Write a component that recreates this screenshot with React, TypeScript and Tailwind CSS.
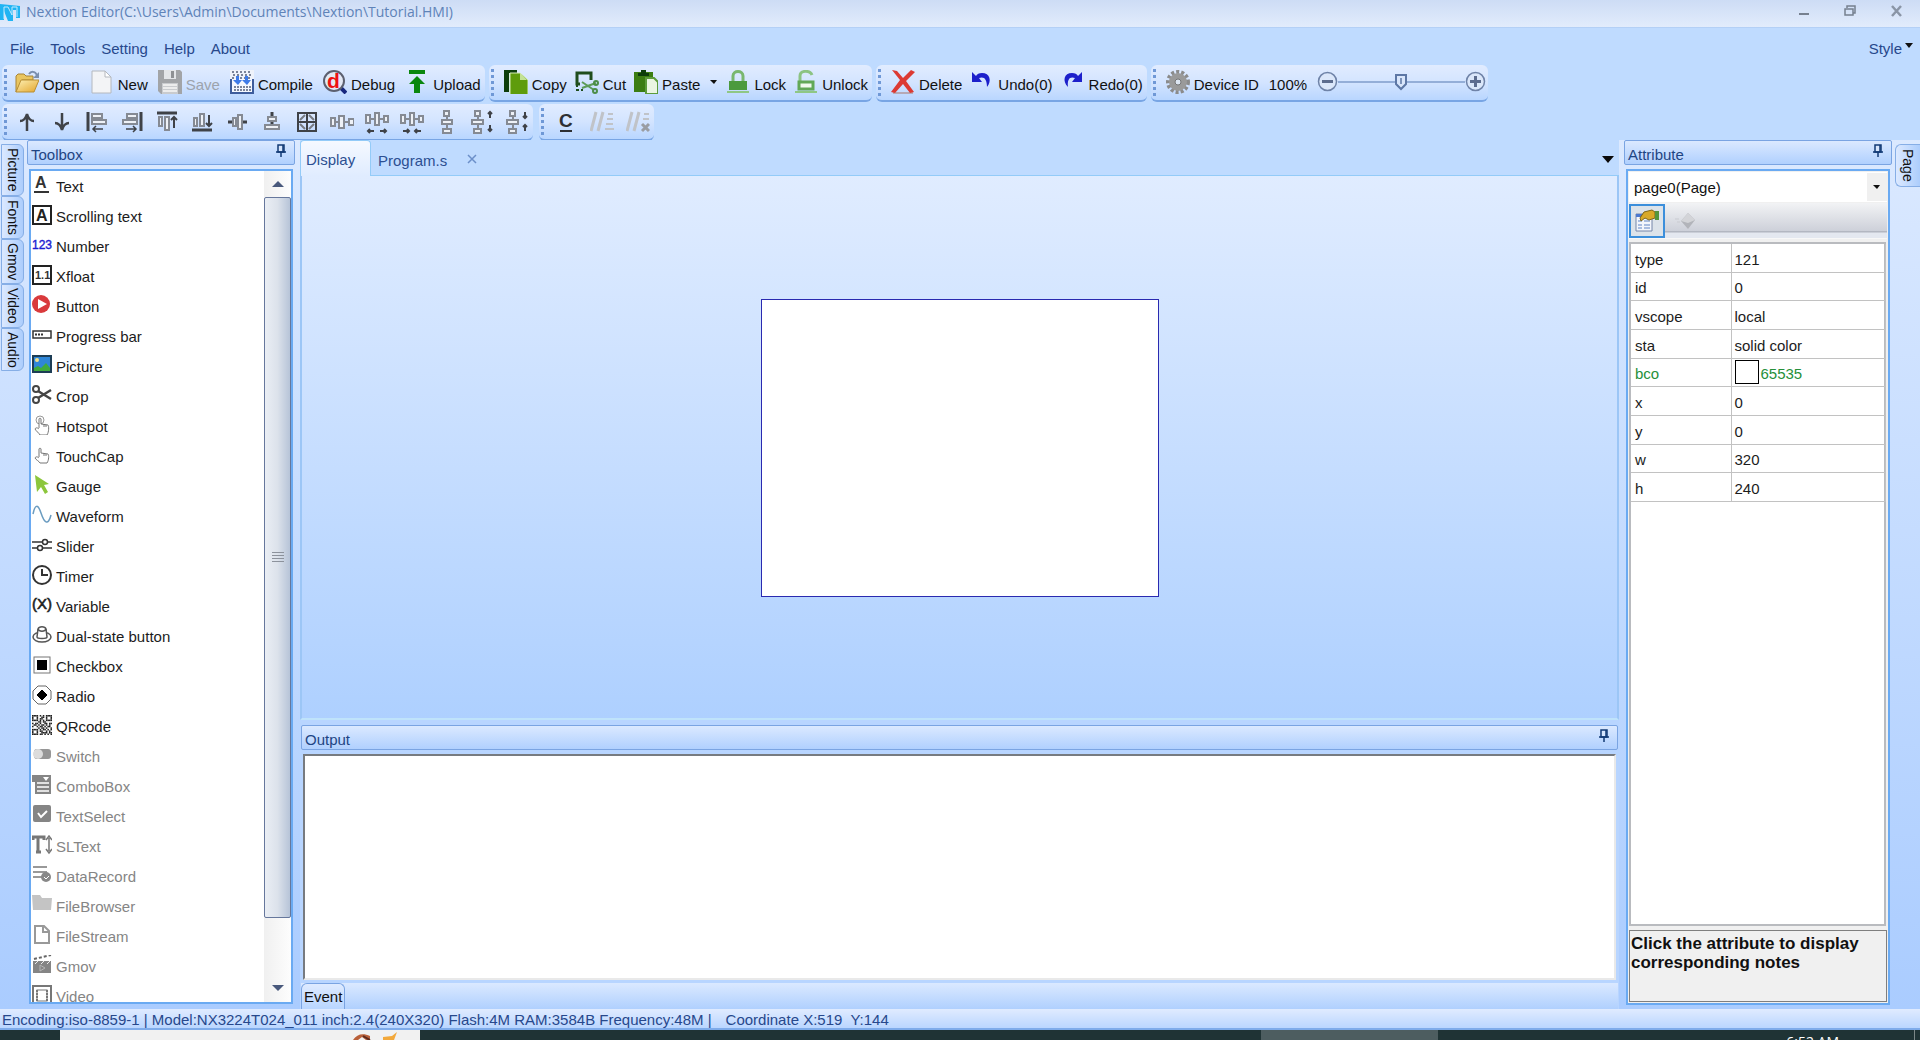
import type { ReactNode } from "react";

const Icon = ({ size = 24, children }: { size?: number; children: ReactNode }) => (
    <svg
        viewBox={`0 0 ${size} ${size}`}
        width={size}
        height={size}
        fill="none"
        aria-hidden="true"
        className="shrink-0"
    >
        {children}
    </svg>
);

/* ---------- main toolbar icons ---------- */

const OpenIcon = () => (
    <Icon>
        <defs>
            <linearGradient id="folder" x1="0" y1="0" x2="1" y2="1">
                <stop offset="0" stopColor="#fdf0b4" />
                <stop offset="1" stopColor="#e3a52c" />
            </linearGradient>
        </defs>
        <path d="M1 22V6l2-2h6l2 2h7v4H7z" fill="#e9c560" stroke="#a98435" />
        <path d="M1 22L6 10h18l-5 12z" fill="url(#folder)" stroke="#b98f35" />
        <path d="M14 4c2-3 6-3 8 1" stroke="#7b8fae" strokeWidth="2" />
        <path d="M24 2v6h-6z" fill="#7b8fae" />
    </Icon>
);

const NewIcon = () => (
    <Icon>
        <path d="M2 1h13l6 6v16H2z" fill="#f3f4f6" stroke="#b4b8be" />
        <path d="M15 1v6h6z" fill="#fff" stroke="#b4b8be" />
    </Icon>
);

const SaveIcon = () => (
    <Icon>
        <path d="M0 0h22l2 2v22H3l-3-3z" fill="#a2a4a7" />
        <path d="M6 0h12v9H6z" fill="#e3e5e8" />
        <path d="M13 1h3v7h-3z" fill="#8f9194" />
        <path d="M4 13h16v11H4z" fill="#c9cbce" />
        <path d="M5 15h14M5 18h14M5 21h14" stroke="#ececec" strokeWidth="2" />
    </Icon>
);

const CompileIcon = () => (
    <Icon>
        <path d="M0 0h24v10H0z" fill="#eef2fa" />
        <path d="M2 2h20M3 5h19M2 8h20" stroke="#7b8499" strokeWidth="2" strokeDasharray="2 2" />
        <path d="M1 9v14h22V9" fill="#f5f8ff" stroke="#3d5c9c" strokeWidth="2" />
        <path d="M4 17h17M4 20h17" stroke="#7b849c" strokeWidth="2" strokeDasharray="2 1" />
        <path d="M6 6h3v4h3l-4 5-5-5h3zM15 6h3v4h3l-4 5-5-5h3z" fill="#3f7be8" />
    </Icon>
);

const DebugIcon = () => (
    <Icon>
        <path d="M17 17l6 6" stroke="#17277e" strokeWidth="4" />
        <circle cx="11" cy="11" r="10" fill="#e4e9f5" stroke="#5c6070" strokeWidth="2" />
        <text x="4" y="18" fontSize="21" fontWeight="bold" fill="#ee1111" fontFamily="Liberation Sans">
            d
        </text>
    </Icon>
);

const UploadIcon = () => (
    <Icon>
        <path d="M4 0h16v4H4z" fill="#0a870f" />
        <path d="M12 6l8 8h-5v9H9v-9H4z" fill="#0a870f" />
    </Icon>
);

const CopyIcon = () => (
    <Icon>
        <path d="M0 0h13v3H5v19H0z" fill="#0c3d0b" />
        <path d="M6 3h10l8 7v15H6z" fill="#5e9c0b" stroke="#d8eebc" />
        <path d="M16 3v7h7z" fill="#c3e294" />
    </Icon>
);

const CutIcon = () => (
    <Icon>
        <path d="M5 14H2V3h14v7" stroke="#1f4d1d" strokeWidth="3" />
        <path d="M2 15v6M2 20h7" stroke="#1f4d1d" strokeWidth="2" strokeDasharray="2 2" />
        <path d="M7 12l12 8M7 18l14-5" stroke="#5d9c59" strokeWidth="2" />
        <circle cx="21" cy="13" r="2" stroke="#4c8d48" strokeWidth="2" />
        <circle cx="20" cy="21" r="2" stroke="#4c8d48" strokeWidth="2" />
    </Icon>
);

const PasteIcon = () => (
    <Icon>
        <path d="M0 2h19v20H0z" fill="#3b7d12" />
        <path d="M4 6V3h3V0h5v3h3v3z" fill="#0c3d0b" />
        <path d="M12 8h8l4 4v12H12z" fill="#eaf5e2" stroke="#5c9c3b" strokeWidth="2" />
    </Icon>
);

const LockIcon = () => (
    <Icon>
        <path d="M7 11V6c0-6 10-6 10 0v5" stroke="#79b76f" strokeWidth="3" />
        <path d="M3 11h18v9H3z" fill="#4b9a3d" />
        <path d="M1 21h22v2H1z" fill="#8fc785" />
    </Icon>
);

const UnlockIcon = () => (
    <Icon>
        <path d="M6 11V6c0-6 10-6 12-1" stroke="#8cc383" strokeWidth="3" />
        <rect x="5" y="12" width="14" height="7" fill="#f0faee" stroke="#62a857" strokeWidth="3" />
        <path d="M1 21h22v2H1z" fill="#8fc785" />
    </Icon>
);

const DeleteIcon = () => (
    <Icon>
        <path d="M2 23h20" stroke="#b6a9b5" strokeWidth="2" />
        <path d="M1 0l5 1 6 7 8-8 4 2-9 9 8 11-4 1-7-9-8 9-4-1 9-12z" fill="#dc3a33" />
    </Icon>
);

const UndoIcon = () => (
    <Icon>
        <path d="M2 2v10h10l-3-4c5-2 8 1 8 9 5-6 3-14-5-14-3 0-5 1-6 3z" fill="#1d20cb" />
    </Icon>
);

const RedoIcon = () => (
    <Icon>
        <path d="M21 2v10H11l3-4C9 6 6 9 7 17 1 11 3 3 11 3c3 0 5 1 6 3z" fill="#1d20cb" />
    </Icon>
);

const GearIcon = () => (
    <Icon>
        <circle cx="12" cy="12" r="10" stroke="#8b8b8b" strokeWidth="4" strokeDasharray="3 2" />
        <circle cx="12" cy="12" r="6" stroke="#9a9a9a" strokeWidth="6" />
        <circle cx="12" cy="12" r="3" fill="#dde6f2" stroke="#757575" />
    </Icon>
);

/* ---------- alignment toolbar icons ---------- */

const dark = "#3f4247";
const box = { fill: "#eef1f6", stroke: "#858a93", strokeWidth: 2 };

const alignTools: { name: string; icon: ReactNode }[] = [
    {
        name: "Move up",
        icon: <path d="M12 21V4M5 11c3 0 6-3 7-7 1 4 4 7 7 7" stroke={dark} strokeWidth="2.5" fill="none" />,
    },
    {
        name: "Move down",
        icon: <path d="M12 3v17M5 13c3 0 6 3 7 7 1-4 4-7 7-7" stroke={dark} strokeWidth="2.5" fill="none" />,
    },
    {
        name: "Align left",
        icon: (
            <>
                <path d="M3 2v19" stroke={dark} strokeWidth="3" />
                <path d="M7 4h10v4H7zM7 10h14v4H7z" {...box} />
                <path d="M8 19h10M11 16l-3 3 3 3" stroke={dark} strokeWidth="1.5" />
            </>
        ),
    },
    {
        name: "Align right",
        icon: (
            <>
                <path d="M21 2v19" stroke={dark} strokeWidth="3" />
                <path d="M7 4h10v4H7zM3 10h14v4H3z" {...box} />
                <path d="M6 19h10M13 16l3 3-3 3" stroke={dark} strokeWidth="1.5" />
            </>
        ),
    },
    {
        name: "Align top",
        icon: (
            <>
                <path d="M2 3h20" stroke={dark} strokeWidth="3" />
                <path d="M4 7h3v9H4zM10 7h4v13h-4z" {...box} />
                <path d="M19 18V7M16 10l3-3 3 3" stroke={dark} strokeWidth="2" />
            </>
        ),
    },
    {
        name: "Align bottom",
        icon: (
            <>
                <path d="M2 20h20" stroke={dark} strokeWidth="3" />
                <path d="M4 8h3v8H4zM10 4h4v12h-4z" {...box} />
                <path d="M19 5v11M16 13l3 3 3-3" stroke={dark} strokeWidth="2" />
            </>
        ),
    },
    {
        name: "Center vertically",
        icon: (
            <>
                <path d="M3 12h4M18 12h4" stroke={dark} strokeWidth="3" />
                <path d="M8 8h3v8H8zM13 5h4v14h-4z" {...box} />
            </>
        ),
    },
    {
        name: "Center horizontally",
        icon: (
            <>
                <path d="M12 2v18" stroke={dark} strokeWidth="3" />
                <path d="M8 7h8v4H8zM5 15h14v4H5z" {...box} />
            </>
        ),
    },
    {
        name: "Same size",
        icon: (
            <>
                <rect x="3" y="3" width="18" height="18" stroke={dark} strokeWidth="2" />
                <path d="M12 3v18M3 12h18" stroke={dark} strokeWidth="2" />
                <path d="M5 10l5-5M14 5l5 5M5 14l5 5M14 19l5-5" stroke="#777b82" strokeWidth="2" />
            </>
        ),
    },
    { name: "Equal horizontal spacing", icon: <path d="M1 8h4v8H1zM9 6h5v12H9zM19 9h5v6h-5zM5 12h4M14 12h5" {...box} /> },
    {
        name: "Increase horizontal spacing",
        icon: (
            <>
                <path d="M1 5h4v8H1zM10 3h4v12h-4zM19 6h4v6h-4zM5 9h5M14 9h5" {...box} />
                <path d="M9 21H3M5 19l-2 2 2 2M15 21h6M19 19l2 2-2 2" stroke={dark} strokeWidth="2" />
            </>
        ),
    },
    {
        name: "Decrease horizontal spacing",
        icon: (
            <>
                <path d="M1 5h4v8H1zM10 3h4v12h-4zM19 6h4v6h-4zM5 9h5M14 9h5" {...box} />
                <path d="M3 21h6M7 19l2 2-2 2M21 21h-6M17 19l-2 2 2 2" stroke={dark} strokeWidth="2" />
            </>
        ),
    },
    { name: "Equal vertical spacing", icon: <path d="M9 1h5v5H9zM7 10h10v4H7zM8 19h8v4H8zM12 6v4M12 14v5" {...box} /> },
    {
        name: "Increase vertical spacing",
        icon: (
            <>
                <path d="M5 1h5v5H5zM2 10h11v4H2zM4 19h7v4H4zM8 6v4M8 14v5" {...box} />
                <path d="M20 8V2M18 4l2-2 2 2M20 15v6M18 19l2 2 2-2" stroke={dark} strokeWidth="2" />
            </>
        ),
    },
    {
        name: "Decrease vertical spacing",
        icon: (
            <>
                <path d="M5 1h5v5H5zM2 10h11v4H2zM4 19h7v4H4zM8 6v4M8 14v5" {...box} />
                <path d="M20 2v6M18 6l2 2 2-2M20 21v-6M18 17l2-2 2 2" stroke={dark} strokeWidth="2" />
            </>
        ),
    },
];

const codeTools: { name: string; icon: ReactNode }[] = [
    {
        name: "Compile code",
        icon: (
            <>
                <text x="5" y="17" fontSize="19" fontWeight="bold" fill="#2d2f33" fontFamily="Liberation Sans">
                    C
                </text>
                <path d="M6 21h12" stroke="#2d2f33" strokeWidth="2" />
            </>
        ),
    },
    {
        name: "Comment",
        icon: (
            <>
                <path d="M1 21L6 2M8 21l5-19" stroke="#c0c3c8" strokeWidth="3" />
                <path d="M18 4h5M17 9h6M16 14h7M15 19h9" stroke="#c0c3c8" strokeWidth="2" />
            </>
        ),
    },
    {
        name: "Uncomment",
        icon: (
            <>
                <path d="M1 21L6 2M8 21l5-19" stroke="#c0c3c8" strokeWidth="3" />
                <path d="M18 4h5M17 9h6" stroke="#c0c3c8" strokeWidth="2" />
                <path d="M16 14l7 7M23 14l-7 7" stroke="#9a9da3" strokeWidth="3" />
            </>
        ),
    },
];

/* ---------- toolbox ---------- */

const qr = [
    "1111010101111",
    "1001001101001",
    "1001011001001",
    "1111010101111",
    "0000110110000",
    "1011010011011",
    "0110101101010",
    "1001011010110",
    "0000101101001",
    "1111010110101",
    "1001011001010",
    "1001001111011",
    "1111011010101",
];

const grey = "#858585";

const components: { name: string; icon: ReactNode; disabled?: boolean }[] = [
    {
        name: "Text",
        icon: (
            <>
                <text x="3" y="13" fontSize="16" fontWeight="bold" fill="#333" fontFamily="Liberation Sans">
                    A
                </text>
                <path d="M2 17h15" stroke="#333" strokeWidth="2" />
            </>
        ),
    },
    {
        name: "Scrolling text",
        icon: (
            <>
                <rect x="1" y="1" width="18" height="18" stroke="#222" strokeWidth="2" />
                <text x="4" y="16" fontSize="16" fontWeight="bold" fill="#222" fontFamily="Liberation Sans">
                    A
                </text>
            </>
        ),
    },
    {
        name: "Number",
        icon: (
            <text x="0" y="14" fontSize="12" fill="#1c1cd2" stroke="#1c1cd2" strokeWidth="0.4" fontFamily="Liberation Sans">
                123
            </text>
        ),
    },
    {
        name: "Xfloat",
        icon: (
            <>
                <rect x="1" y="1" width="18" height="18" stroke="#222" strokeWidth="2" />
                <text x="3" y="14" fontSize="11" fontWeight="bold" fill="#333" fontFamily="Liberation Sans">
                    1.1
                </text>
            </>
        ),
    },
    {
        name: "Button",
        icon: (
            <>
                <circle cx="9" cy="9" r="9" fill="#d93a3c" />
                <path d="M6 4l9 5-9 5z" fill="#fff" />
            </>
        ),
    },
    {
        name: "Progress bar",
        icon: (
            <>
                <rect x="1" y="6" width="18" height="7" stroke="#333" strokeWidth="1.5" />
                <path d="M3 9.500h9" stroke="#333" strokeWidth="2" strokeDasharray="2 1" />
            </>
        ),
    },
    {
        name: "Picture",
        icon: (
            <>
                <rect x="1" y="1" width="18" height="16" fill="#2f86d8" stroke="#1d3d55" strokeWidth="2" />
                <path d="M2 16v-3l4-2 3 2 5-5 4 5v3z" fill="#3fab3e" />
                <circle cx="5" cy="5" r="2" fill="#f2e08b" />
            </>
        ),
    },
    {
        name: "Crop",
        icon: (
            <>
                <circle cx="4" cy="4" r="3" stroke="#444" strokeWidth="2" />
                <circle cx="4" cy="15" r="3" stroke="#444" strokeWidth="2" />
                <path d="M6 6l13 8M6 13l13-8" stroke="#444" strokeWidth="2.5" />
            </>
        ),
    },
    {
        name: "Hotspot",
        icon: (
            <>
                <circle cx="8" cy="5" r="4" stroke="#999" />
                <path d="M7 13V4c0-1 2-1 2 0v5l7 1c1 1 1 7-1 10H8c-1-2-4-4-5-6 1-2 3-1 4 0" fill="#fff" stroke="#777" />
                <path d="M12 9v3M14 10v2" stroke="#777" />
            </>
        ),
    },
    {
        name: "TouchCap",
        icon: (
            <>
                <path d="M7 12V4c0-1 2-1 2 0v4l7 1c1 1 1 6-1 9H8c-1-2-4-3-5-5 1-2 3-1 4 0" fill="#fff" stroke="#777" />
                <path d="M12 8v3M14 9v2" stroke="#777" />
            </>
        ),
    },
    { name: "Gauge", icon: <path d="M3 0l14 9-5 1 4 7-3 2-4-7-4 5z" fill="#8cc63c" /> },
    {
        name: "Waveform",
        icon: <path d="M1 9C3-1 6-1 9 8s7 14 10 2" stroke="#6b9cc0" strokeWidth="1.5" />,
    },
    {
        name: "Slider",
        icon: (
            <>
                <path d="M0 7h20M0 13h20" stroke="#333" strokeWidth="1.5" />
                <circle cx="13" cy="7" r="2.500" fill="#fff" stroke="#333" strokeWidth="1.5" />
                <circle cx="8" cy="13" r="2.500" fill="#fff" stroke="#333" strokeWidth="1.5" />
            </>
        ),
    },
    {
        name: "Timer",
        icon: (
            <>
                <circle cx="10" cy="10" r="9" stroke="#333" strokeWidth="2" />
                <path d="M10 4v6h6" stroke="#333" strokeWidth="2" />
            </>
        ),
    },
    {
        name: "Variable",
        icon: (
            <text x="0" y="14" fontSize="15" fill="#222" stroke="#222" strokeWidth="0.6" fontFamily="Liberation Sans">
                (X)
            </text>
        ),
    },
    {
        name: "Dual-state button",
        icon: (
            <>
                <ellipse cx="10" cy="12" rx="9" ry="5" fill="#fff" stroke="#555" strokeWidth="1.5" />
                <path d="M5 12l1-8c1-3 7-3 8 0l1 8c0 2-10 2-10 0z" fill="#fff" stroke="#555" strokeWidth="1.5" />
                <path d="M6 4c1 3 7 3 8 0" stroke="#555" strokeWidth="1.5" />
            </>
        ),
    },
    {
        name: "Checkbox",
        icon: (
            <>
                <rect x="2" y="2" width="16" height="16" stroke="#777" />
                <path d="M5 5h10v10H5z" fill="#000" />
            </>
        ),
    },
    {
        name: "Radio",
        icon: (
            <>
                <path d="M6 1h8l5 5v8l-5 5H6l-5-5V6z" stroke="#666" />
                <path d="M10 5l5 5-5 5-5-5z" fill="#000" stroke="#000" />
            </>
        ),
    },
    {
        name: "QRcode",
        icon: (
            <g transform="scale(1.54)" fill="#222">
                {qr.map((row, y) =>
                    row.split("").map((c, x) => (c === "1" ? <rect key={`${x}-${y}`} x={x} y={y} width="1" height="1" /> : null)),
                )}
            </g>
        ),
    },
    {
        name: "Switch",
        disabled: true,
        icon: (
            <>
                <rect x="2" y="4" width="17" height="10" rx="3" fill="#969696" />
                <circle cx="6" cy="9" r="5" fill="#dcdcdc" />
            </>
        ),
    },
    {
        name: "ComboBox",
        disabled: true,
        icon: (
            <>
                <path d="M0 0h19v19H3V7H0z" fill={grey} />
                <path d="M11 2h6l-3 4z" fill="#fff" />
                <path d="M5 8h12M5 12h12M5 16h12" stroke="#fff" strokeWidth="1.5" />
            </>
        ),
    },
    {
        name: "TextSelect",
        disabled: true,
        icon: (
            <>
                <rect x="1" y="0" width="18" height="17" rx="2" fill={grey} />
                <path d="M6 8l3 4 6-6" stroke="#fff" strokeWidth="2" />
            </>
        ),
    },
    {
        name: "SLText",
        disabled: true,
        icon: (
            <>
                <path d="M1 5V2h11v3M6 2v15M4 17h5" stroke="#777" strokeWidth="3" />
                <path d="M17 3v13M14 5l3-4 3 4M14 14l3 4 3-4" stroke="#777" strokeWidth="1.5" />
            </>
        ),
    },
    {
        name: "DataRecord",
        disabled: true,
        icon: (
            <>
                <path d="M1 2h14M1 7h14M1 12h9" stroke="#999" strokeWidth="2" />
                <circle cx="14" cy="12" r="5" fill="#888" />
                <path d="M12 12l2 2 3-3" stroke="#fff" />
            </>
        ),
    },
    {
        name: "FileBrowser",
        disabled: true,
        icon: <path d="M0 0h8l2 3h10l-1 12H1z" fill="#c4c4c4" />,
    },
    {
        name: "FileStream",
        disabled: true,
        icon: (
            <>
                <path d="M3 1h9l5 5v12H3z" fill="#fff" stroke="#999" strokeWidth="2" />
                <path d="M11 1v6h6" stroke="#999" strokeWidth="2" />
            </>
        ),
    },
    {
        name: "Gmov",
        disabled: true,
        icon: (
            <>
                <path d="M1 6h18v12H1z" fill={grey} />
                <path d="M2 4l17-4" stroke="#666" strokeWidth="2" strokeDasharray="3 2" />
                <path d="M3 9l3-3M9 9l3-3M15 9l3-3" stroke="#eee" />
                <path d="M8 10l5 3-5 3z" stroke="#b5b5b5" />
            </>
        ),
    },
    {
        name: "Video",
        disabled: true,
        icon: (
            <>
                <rect x="1" y="1" width="18" height="19" stroke="#777" strokeWidth="2" />
                <rect x="5" y="5" width="10" height="11" stroke="#777" />
                <path d="M5 5v12M15 5v12" stroke="#777" strokeWidth="2" strokeDasharray="2 1" />
            </>
        ),
    },
];

const attributes = [
    ["type", "121"],
    ["id", "0"],
    ["vscope", "local"],
    ["sta", "solid color"],
    ["bco", "65535"],
    ["x", "0"],
    ["y", "0"],
    ["w", "320"],
    ["h", "240"],
];

/* ---------- shared pieces ---------- */

const Grip = () => (
    <span className="w-[3px] h-7 shrink-0 bg-[repeating-linear-gradient(#6f98d6_0_3px,transparent_3px_6px)]" />
);

const ToolGroup = ({ label, children }: { label: string; children: ReactNode }) => (
    <div
        role="toolbar"
        aria-label={label}
        className="flex items-center h-[37px] pl-[2px] rounded-md border-b-2 border-[#78a5e4] bg-gradient-to-b from-[#e1ecff] via-[#d3e4ff] to-[#b9d6ff]"
    >
        <Grip />
        {children}
    </div>
);

const ToolButton = ({ label, icon, disabled }: { label: string; icon: ReactNode; disabled?: boolean }) => (
    <button disabled={disabled} className="flex items-center gap-1 disabled:text-[#9da3ac]">
        {icon}
        <span className="pt-[6px]">{label}</span>
    </button>
);

const IconButton = ({ name, icon }: { name: string; icon: ReactNode }) => (
    <button aria-label={name}>
        <Icon>{icon}</Icon>
    </button>
);

const Pin = () => (
    <button aria-label="Auto hide" className="pb-1">
        <svg viewBox="0 0 10 14" width="10" height="14" fill="none" aria-hidden="true">
            <path d="M2 1h6v7H2z" fill="#d7e6fd" stroke="#123a76" strokeWidth="1.5" />
            <path d="M7 1v7M0 8h10M5 8v5" stroke="#123a76" strokeWidth="1.5" />
        </svg>
    </button>
);

const PanelHeader = ({ title }: { title: string }) => (
    <div className="flex items-center justify-between h-[25px] shrink-0 pl-[3px] pr-2 rounded-xs border border-[#7aa4e2] bg-gradient-to-b from-[#dbe9ff] to-[#b0d0fe] text-[#1f4583]">
        <h2 className="pt-1">{title}</h2>
        <Pin />
    </div>
);

const SideTab = ({ label, side }: { label: string; side: "left" | "right" }) => (
    <button
        className={
            side === "left"
                ? "flex justify-center w-[23px] py-[3px] text-sm leading-5 border border-[#86aee6] rounded-r-md bg-gradient-to-r from-[#dce9ff] to-[#accdfc]"
                : "flex justify-center w-full py-1 text-sm leading-5 border border-r-0 border-[#86aee6] rounded-l-md bg-gradient-to-r from-[#dce9ff] to-[#accdfc]"
        }
    >
        <span className="[writing-mode:vertical-rl]">{label}</span>
    </button>
);

const Zoom = () => (
    <div className="flex items-center">
        <button aria-label="Zoom out">
            <svg viewBox="0 0 21 21" width="21" height="21" fill="none" aria-hidden="true">
                <circle cx="10.500" cy="10.500" r="9" fill="#dbe7fa" stroke="#6f83a8" strokeWidth="1.5" />
                <path d="M5 10.500h11" stroke="#5c6c8e" strokeWidth="3" />
            </svg>
        </button>
        <div className="relative flex items-center w-[127px] h-5">
            <svg viewBox="0 0 127 20" width="127" height="20" fill="none" aria-hidden="true">
                <path d="M0 10h127" stroke="#7f9ccb" strokeWidth="1.5" />
                <path d="M58 3h10v9l-5 5-5-5z" fill="#d9e6fb" stroke="#5d77a5" strokeWidth="2" />
                <path d="M63 6v6" stroke="#5d77a5" strokeWidth="1.5" />
            </svg>
            <input
                type="range"
                aria-label="Zoom level"
                min="0"
                max="200"
                defaultValue="100"
                className="absolute inset-0 w-full opacity-0"
            />
        </div>
        <button aria-label="Zoom in">
            <svg viewBox="0 0 21 21" width="21" height="21" fill="none" aria-hidden="true">
                <circle cx="10.500" cy="10.500" r="9" fill="#dbe7fa" stroke="#6f83a8" strokeWidth="1.5" />
                <path d="M5 10.500h11M10.500 5v11" stroke="#5c6c8e" strokeWidth="3" />
            </svg>
        </button>
    </div>
);

/* ---------- window sections ---------- */

const TitleBar = () => (
    <header className="flex items-center justify-between h-7 shrink-0 pr-[17px] border-b border-[#b4d0f6] bg-gradient-to-b from-[#cddcf5] to-[#e2ecfc]">
        <div className="flex items-center gap-[5px] pb-1">
            <svg viewBox="0 0 21 20" width="21" height="20" fill="none" aria-hidden="true">
                <path d="M0 2l20 2v12h-4v-8h-3v11H8L4 9v9H0z" fill="#1fb4f3" />
                <path d="M4 17V5h4l4 8V5h5v10" stroke="#bfeaff" strokeWidth="1" />
            </svg>
            <h1 className="font-['Open_Sans',sans-serif] text-sm leading-5 text-[#5f83b8]">
                Nextion Editor(C:\Users\Admin\Documents\Nextion\Tutorial.HMI)
            </h1>
        </div>
        <div className="flex items-center gap-[35px] pb-[6px]">
            <button aria-label="Minimize">
                <svg viewBox="0 0 10 12" width="10" height="12" aria-hidden="true">
                    <path d="M0 8h10v2H0z" fill="#76808f" />
                </svg>
            </button>
            <button aria-label="Restore">
                <svg viewBox="0 0 12 12" width="12" height="12" fill="none" aria-hidden="true">
                    <path d="M3 3V1h8v7H9" stroke="#76808f" strokeWidth="1.5" />
                    <path d="M1 4h8v6H1z" stroke="#76808f" strokeWidth="1.5" />
                </svg>
            </button>
            <button aria-label="Close">
                <svg viewBox="0 0 12 12" width="12" height="12" fill="none" aria-hidden="true">
                    <path d="M1 1l9 10M10 1L1 11" stroke="#8a95a6" strokeWidth="2.500" />
                </svg>
            </button>
        </div>
    </header>
);

const MenuBar = () => (
    <nav className="flex items-center justify-between h-[37px] shrink-0 pl-[10px] pr-[7px] pt-1 text-[#27488c]">
        <div className="flex gap-4">
            <button>File</button>
            <button>Tools</button>
            <button>Setting</button>
            <button>Help</button>
            <button>About</button>
        </div>
        <button className="flex gap-[3px]">
            Style
            <svg viewBox="0 0 8 12" width="8" height="12" aria-hidden="true">
                <path d="M0 4h8l-4 5z" fill="#111" />
            </svg>
        </button>
    </nav>
);

const Toolbars = () => (
    <div className="flex flex-col gap-[2px] h-[75px] shrink-0 pl-[2px]">
        <div className="flex gap-1">
            <ToolGroup label="File">
                <div className="flex gap-[10px] pl-2 pr-1 pb-[2px]">
                    <ToolButton label="Open" icon={<OpenIcon />} />
                    <ToolButton label="New" icon={<NewIcon />} />
                    <ToolButton label="Save" icon={<SaveIcon />} disabled />
                    <ToolButton label="Compile" icon={<CompileIcon />} />
                    <ToolButton label="Debug" icon={<DebugIcon />} />
                    <ToolButton label="Upload" icon={<UploadIcon />} />
                </div>
            </ToolGroup>
            <ToolGroup label="Edit">
                <div className="flex gap-2 pl-[10px] pr-1 pb-[2px]">
                    <ToolButton label="Copy" icon={<CopyIcon />} />
                    <ToolButton label="Cut" icon={<CutIcon />} />
                    <ToolButton label="Paste" icon={<PasteIcon />} />
                    <button aria-label="Paste options">
                        <svg viewBox="0 0 10 10" width="10" height="10" aria-hidden="true">
                            <path d="M2 3h7L6 7z" fill="#111" />
                        </svg>
                    </button>
                    <ToolButton label="Lock" icon={<LockIcon />} />
                    <ToolButton label="Unlock" icon={<UnlockIcon />} />
                </div>
            </ToolGroup>
            <ToolGroup label="History">
                <div className="flex gap-2 pl-[10px] pr-1 pb-[2px]">
                    <ToolButton label="Delete" icon={<DeleteIcon />} />
                    <ToolButton label="Undo(0)" icon={<UndoIcon />} />
                    <ToolButton label="Redo(0)" icon={<RedoIcon />} />
                </div>
            </ToolGroup>
            <ToolGroup label="Device">
                <div className="flex items-center gap-[10px] pl-[10px] pr-[2px] pb-[2px]">
                    <ToolButton label="Device ID" icon={<GearIcon />} />
                    <span className="pt-[6px]">100%</span>
                    <Zoom />
                </div>
            </ToolGroup>
        </div>
        <div className="flex gap-[6px]">
            <ToolGroup label="Align">
                <div className="flex gap-[11px] pl-2 pr-1">
                    {alignTools.map((tool) => (
                        <IconButton key={tool.name} {...tool} />
                    ))}
                </div>
            </ToolGroup>
            <ToolGroup label="Code">
                <div className="flex gap-3 pl-[10px] pr-1">
                    {codeTools.map((tool) => (
                        <IconButton key={tool.name} {...tool} />
                    ))}
                </div>
            </ToolGroup>
        </div>
    </div>
);

const Toolbox = () => (
    <aside className="flex flex-col gap-1 w-[268px] shrink-0 pb-[5px]">
        <PanelHeader title="Toolbox" />
        <div className="flex flex-1 min-h-0 mx-[2px] border-2 border-[#6aaaf2] bg-white">
            <ul className="flex-1 min-h-0 overflow-hidden pt-px">
                {components.map((item) => (
                    <li key={item.name}>
                        <button disabled={item.disabled} className="flex items-center gap-1 w-full h-[30px] pl-px text-[#1c1c1c] disabled:text-[#858585]">
                            <span className="pb-1">
                                <Icon size={20}>{item.icon}</Icon>
                            </span>
                            <span>{item.name}</span>
                        </button>
                    </li>
                ))}
            </ul>
            <div className="flex flex-col w-[27px] bg-gradient-to-r from-[#f0f0f0] to-[#fdfdfd]">
                <button aria-label="Scroll up" className="flex items-center justify-center h-[26px]">
                    <svg viewBox="0 0 12 8" width="12" height="8" aria-hidden="true">
                        <path d="M0 7l6-6 6 6z" fill="#49597c" />
                    </svg>
                </button>
                <div className="flex flex-1 items-center justify-center rounded-xs border border-[#66779c] bg-gradient-to-r from-[#eaeef4] via-[#dce2eb] to-[#b7c4d8]">
                    <span className="w-3 h-3 bg-[repeating-linear-gradient(#8c929c_0_1px,transparent_1px_3px)]" />
                </div>
                <button aria-label="Scroll down" className="flex items-end justify-center h-[84px] pb-[10px]">
                    <svg viewBox="0 0 12 8" width="12" height="8" aria-hidden="true">
                        <path d="M0 1l6 6 6-6z" fill="#49597c" />
                    </svg>
                </button>
            </div>
        </div>
    </aside>
);

const Workspace = () => (
    <main className="flex flex-col flex-1 min-w-0">
        <div className="flex items-stretch h-9 shrink-0 bg-[#bfdbff] text-[#2c4f92]">
            <button className="w-[71px] pl-[5px] pt-[3px] text-left rounded-t-sm border border-b-0 border-[#93cbf8] bg-gradient-to-b from-[#f5f9ff] to-[#e0ecff]">
                Display
            </button>
            <div className="flex flex-1 items-center justify-between pl-[7px] pr-[5px] pt-[3px] border-b border-[#93cbf8]">
                <div className="flex items-center gap-5">
                    <button className="pt-[3px]">Program.s</button>
                    <button aria-label="Close tab">
                        <svg viewBox="0 0 10 10" width="10" height="10" aria-hidden="true">
                            <path d="M1 1l8 8M9 1L1 9" stroke="#6b8fc9" strokeWidth="1.5" />
                        </svg>
                    </button>
                </div>
                <button aria-label="Tab list">
                    <svg viewBox="0 0 12 8" width="12" height="8" aria-hidden="true">
                        <path d="M0 1h12L6 8z" fill="#0a0a0a" />
                    </svg>
                </button>
            </div>
        </div>
        <section
            aria-label="Display"
            className="flex flex-1 items-center justify-center pt-[2px] border-2 border-t-0 border-[#9cc6f6] border-b-[#bfe3fb] bg-gradient-to-b from-[#e0ecff] to-[#aed0ff]"
        >
            <div className="w-[398px] h-[298px] border border-[#2a2ab0] bg-white" />
        </section>
        <section className="flex flex-col h-[289px] shrink-0 pt-[5px] px-px bg-[#b8d5ff]">
            <PanelHeader title="Output" />
            <div className="flex flex-1 min-h-0 m-[2px] mt-1">
                <textarea
                    aria-label="Output"
                    readOnly
                    className="flex-1 resize-none border-2 border-t-[#777b80] border-l-[#777b80] border-r-[#e9e9e9] border-b-[#e9e9e9] bg-white"
                />
            </div>
            <div className="h-[26px] shrink-0 mt-px bg-gradient-to-b from-[#dbe9ff] to-[#b0d0fe]">
                <button className="h-full px-[2px] rounded-t-md border border-b-0 border-[#7aa4e2] bg-gradient-to-b from-[#dfebff] to-[#b9d6ff]">
                    Event
                </button>
            </div>
        </section>
    </main>
);

const AttributePanel = () => (
    <aside className="flex flex-col gap-1 w-[268px] shrink-0 pb-1">
        <PanelHeader title="Attribute" />
        <div className="flex flex-col flex-1 min-h-0 mx-[2px] p-px border-2 border-[#6aaaf2] bg-[#f0f0f0]">
            <div className="relative flex h-[30px] shrink-0 bg-white">
                <select aria-label="Component" className="flex-1 pl-[5px] pt-px appearance-none">
                    <option>page0(Page)</option>
                </select>
                <span className="pointer-events-none absolute right-0 inset-y-px flex items-center justify-center w-5 bg-[#f0f0f0]">
                    <svg viewBox="0 0 8 5" width="8" height="5" aria-hidden="true">
                        <path d="M0 0h7L4 4z" fill="#111" />
                    </svg>
                </span>
            </div>
            <div className="flex items-center h-9 shrink-0 mt-px gap-2 border-b border-[#f8f8f8] bg-[linear-gradient(#f2f3f5,#cdd0d9_80%,#a9adb8_82%,#e4e8f0_86%)]">
                <button aria-label="Properties" className="flex items-center justify-center w-9 h-[34px] border-2 border-[#3c8fdb] bg-[#dce3ea]">
                    <Icon>
                        <path d="M1 5h16v17H1z" fill="#f3f6fc" stroke="#7486a8" />
                        <path d="M1 5h9v3H1z" fill="#4b78cf" />
                        <path d="M3 12h4M9 12h6M3 16h4M9 16h6M3 19h4M9 19h6" stroke="#a9bde0" strokeWidth="2" />
                        <path d="M5 9l4-6 8-2 3 2v6l-6 2-4-2-4 3z" fill="#d8a928" stroke="#7d671c" />
                        <path d="M20 2h4v9h-4z" fill="#52963e" />
                    </Icon>
                </button>
                <button aria-label="Events">
                    <Icon>
                        <path d="M8 12l7-8 7 7-7 9z" fill="#b2b4ba" />
                        <path d="M8 12l7-8 7 7-7 3z" fill="#d3d4d8" />
                        <path d="M2 10h4M4 13h3" stroke="#c9cbd0" />
                    </Icon>
                </button>
            </div>
            <div className="flex-1 min-h-0 mt-[3px] mr-px border-2 border-[#b9bbbf] bg-white">
                <table className="w-[255px] h-[258px] border-collapse table-fixed text-[#1c1c1c]">
                    <tbody>
                        {attributes.map(([name, value]) => (
                            <tr key={name} className={name === "bco" ? "text-[#26903a]" : ""}>
                                <th scope="row" className="w-[100px] pl-1 pt-1 pb-0 text-left font-normal border-r border-b border-[#c2c2c2]">
                                    {name}
                                </th>
                                <td className="pl-[3px] border-r border-b border-[#c2c2c2]">
                                    <div className="flex items-center gap-[2px] h-6">
                                        {name === "bco" && <span className="w-6 h-6 border border-black bg-white" />}
                                        <span className="pt-1">{value}</span>
                                    </div>
                                </td>
                            </tr>
                        ))}
                    </tbody>
                </table>
            </div>
            <p className="h-[72px] shrink-0 mt-1 px-px pt-[3px] border border-[#7f7f7f] text-[17px] leading-[19px] font-bold text-[#111]">
                Click the attribute to display corresponding notes
            </p>
        </div>
    </aside>
);

const StatusBar = () => (
    <footer className="flex items-center gap-[14px] h-[21px] shrink-0 pl-[2px] pt-[2px] border-b-2 border-[#7eabea] bg-gradient-to-b from-[#e0ebff] to-[#bad6ff] text-[#27488c] whitespace-pre">
        <span>Encoding:iso-8859-1 | Model:NX3224T024_011 inch:2.4(240X320) Flash:4M RAM:3584B Frequency:48M |</span>
        <span>Coordinate X:519  Y:144</span>
    </footer>
);

const Taskbar = () => (
    <div className="flex h-[10px] shrink-0 overflow-hidden bg-[#1f3335]">
        <div className="flex justify-end w-[360px] ml-[60px] pr-5 bg-[#f1f1f1]">
            <svg viewBox="0 0 50 10" width="50" height="10" fill="none" aria-hidden="true">
                <path d="M3 10c4-6 10-7 17-4v4h-4l-4-3-4 3z" fill="#b9603a" />
                <path d="M13 6l7 4" stroke="#5b2b20" strokeWidth="2" />
                <path d="M33 7l9-1 5-4-3 8H33z" fill="#f2a83b" />
            </svg>
        </div>
        <div className="w-[177px] ml-auto mr-[348px] bg-[#4d5d60]" />
        <span className="pt-1 font-['Open_Sans',sans-serif] text-sm leading-4 text-white">6:52 AM</span>
        <div className="w-[6px] ml-[75px] border-l border-[#7b8788]" />
    </div>
);

export default function App() {
    return (
        <div className="flex flex-col h-screen overflow-hidden bg-[#bfdbff] font-['Liberation_Sans',Arial,sans-serif] text-[15px] leading-5 text-[#111]">
            <TitleBar />
            <MenuBar />
            <Toolbars />
            <div className="flex flex-1 min-h-0 bg-gradient-to-b from-[#dbe9ff] to-[#aaccff]">
                <nav aria-label="Resources" className="flex flex-col w-[27px] shrink-0 pl-px pt-1">
                    <SideTab label="Picture" side="left" />
                    <SideTab label="Fonts" side="left" />
                    <SideTab label="Gmov" side="left" />
                    <SideTab label="Video" side="left" />
                    <SideTab label="Audio" side="left" />
                </nav>
                <Toolbox />
                <div className="w-[5px] shrink-0" />
                <Workspace />
                <div className="w-[5px] shrink-0" />
                <AttributePanel />
                <nav aria-label="Pages" className="w-7 shrink-0 pl-[3px] pt-1">
                    <SideTab label="Page" side="right" />
                </nav>
            </div>
            <StatusBar />
            <Taskbar />
        </div>
    );
}
